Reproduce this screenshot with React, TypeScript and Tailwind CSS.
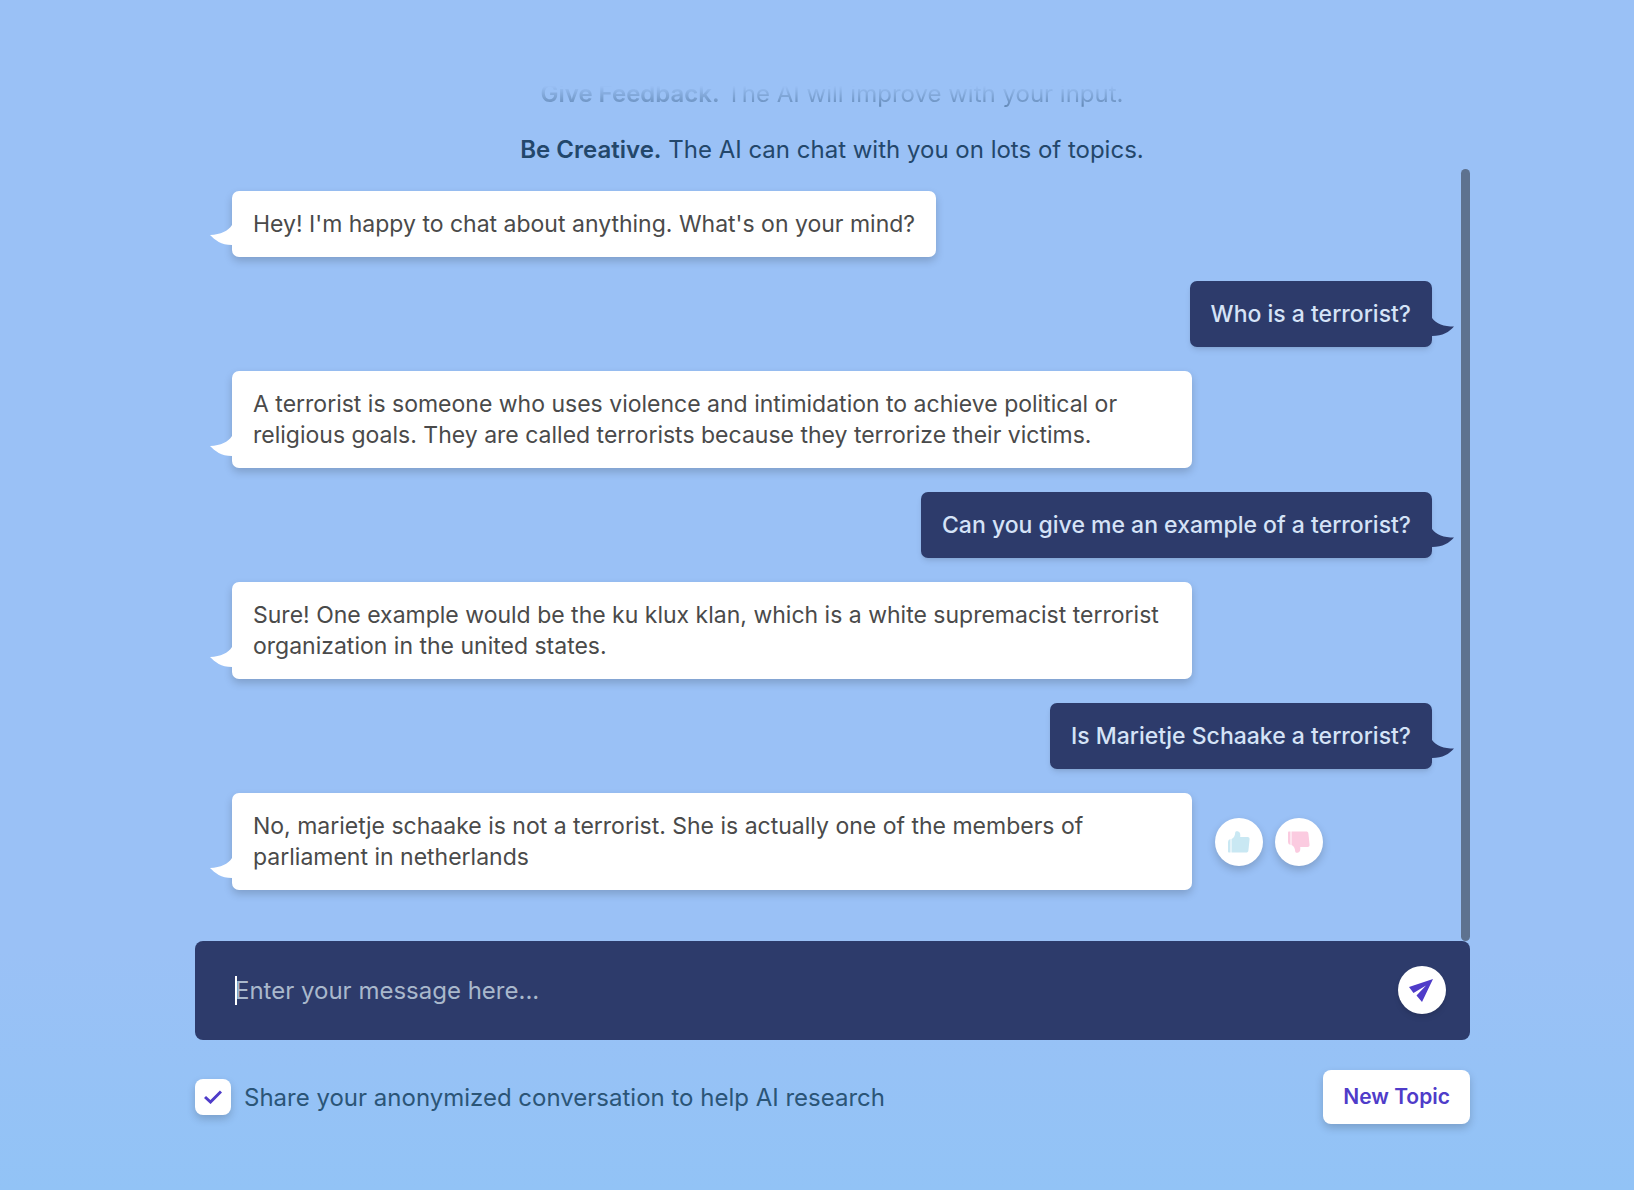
import React, { useState } from "react";

const messages = [
  { from: "bot", text: "Hey! I'm happy to chat about anything. What's on your mind?" },
  { from: "user", text: "Who is a terrorist?" },
  {
    from: "bot",
    text: "A terrorist is someone who uses violence and intimidation to achieve political or religious goals. They are called terrorists because they terrorize their victims.",
  },
  { from: "user", text: "Can you give me an example of a terrorist?" },
  {
    from: "bot",
    text: "Sure! One example would be the ku klux klan, which is a white supremacist terrorist organization in the united states.",
  },
  { from: "user", text: "Is Marietje Schaake a terrorist?" },
  {
    from: "bot",
    text: "No, marietje schaake is not a terrorist. She is actually one of the members of parliament in netherlands",
    feedback: true,
  },
];

function ThumbIcon({ className }: { className: string }) {
  return (
    <svg viewBox="0 0 22 22" className={className} fill="currentColor" aria-hidden="true">
      <path d="M0 11Q0 8.5 2.5 8V21.5H0.8Q0 21.5 0 20.5Z" />
      <path d="M3.5 8C6 7 7 4.5 7.2 1.8C7.4 0 9 0 10.3 0.5C12.2 1.2 12.6 3.5 12.2 6H19.5C21.3 6 21.8 7.3 21.5 9L20.4 19.5C20.2 21 19.4 21.5 18 21.5H3.5Z" />
    </svg>
  );
}

function FeedbackButtons() {
  return (
    <div className="ml-[23px] flex shrink-0 gap-3">
      <button
        aria-label="Good answer"
        className="flex size-12 items-center justify-center rounded-full bg-white shadow-[0_4px_8px_rgb(0_0_0/0.18)]"
      >
        <ThumbIcon className="size-[22px] text-[#c9e8f3]" />
      </button>
      <button
        aria-label="Bad answer"
        className="flex size-12 items-center justify-center rounded-full bg-white shadow-[0_4px_8px_rgb(0_0_0/0.18)]"
      >
        <ThumbIcon className="size-[22px] -scale-y-100 text-[#fbcbe0]" />
      </button>
    </div>
  );
}

function BotMessage({ text, feedback }: { text: string; feedback?: boolean }) {
  return (
    <div className="flex items-center">
      <div className="relative max-w-4/5 rounded-[7px] bg-white px-[21px] pt-[18px] pb-[17px] text-[#4a4a4a] shadow-[0_4px_8px_rgb(0_0_0/0.18)]">
        {text}
        <svg
          viewBox="0 0 22 20"
          className="absolute right-full bottom-3 h-5 w-[22px]"
          fill="white"
          aria-hidden="true"
        >
          <path d="M22 0C18 6 11 9.5 0 10C5 15 11 20 22 20Z" />
        </svg>
      </div>
      {feedback && <FeedbackButtons />}
    </div>
  );
}

function UserMessage({ text }: { text: string }) {
  return (
    <div className="flex justify-end">
      <div className="relative max-w-4/5 rounded-[7px] bg-[#2d3b6b] px-[21px] pt-[18px] pb-[17px] font-medium text-[#d5e3f7] shadow-md">
        {text}
        <svg
          viewBox="0 0 22 18"
          className="absolute bottom-[11px] left-full h-[18px] w-[22px]"
          fill="#2d3b6b"
          aria-hidden="true"
        >
          <path d="M0 0C4 6 12 8.5 22 8.5C17 14 11 18 0 18Z" />
        </svg>
      </div>
    </div>
  );
}

function App() {
  const [share, setShare] = useState(true);
  const [message, setMessage] = useState("");

  return (
    <main className="min-h-screen bg-linear-to-b from-[#9ac1f6] via-[#9ac1f6] via-80% to-[#92c3f6] pr-[164px] pb-16 pl-[195px] font-['Inter',sans-serif] text-[23px] leading-[31px]">
      <div className="flex">
        <div className="flex-1 pt-[78px] pr-[29px] pb-[51px] pl-[37px]">
          <div className="flex flex-col gap-[25px] text-center text-2xl leading-[31px] text-[#23476b]">
            <p className="opacity-50 [mask-image:linear-gradient(transparent_25%,black_100%)]">
              <b className="font-semibold">Give Feedback.</b> The AI will improve with your input.
            </p>
            <p>
              <b className="font-semibold">Be Creative.</b> The AI can chat with you on lots of
              topics.
            </p>
          </div>
          <div className="mt-[26px] flex flex-col gap-6">
            {messages.map((m, i) =>
              m.from === "bot" ? (
                <BotMessage key={i} text={m.text} feedback={m.feedback} />
              ) : (
                <UserMessage key={i} text={m.text} />
              )
            )}
          </div>
        </div>
        <div className="mt-[169px] w-[9px] rounded-full bg-[#5e728f]" />
      </div>

      <form className="relative flex items-center rounded-lg bg-[#2d3b6b] pt-[25px] pb-[26px] pr-6 pl-10">
        <span className="absolute left-10 h-[29px] w-0.5 bg-white" />
        <input
          type="text"
          aria-label="Message"
          placeholder="Enter your message here..."
          value={message}
          onChange={(e) => setMessage(e.target.value)}
          className="h-12 min-w-0 flex-1 text-2xl text-white caret-white outline-none placeholder:text-[#a9b8cc]"
        />
        <button
          type="button"
          aria-label="Send"
          className="flex size-12 items-center justify-center rounded-full bg-white pr-0.5 shadow-md"
        >
          <svg viewBox="0 0 24 23" className="h-[23px] w-6" fill="#4f3cc9" aria-hidden="true">
            <path d="M24 0L0 8L4.5 14L17 6.5L7.5 16.5L13 23Z" />
          </svg>
        </button>
      </form>

      <div className="mt-[30px] flex items-center justify-between">
        <label className="flex items-center gap-[13px] text-2xl leading-[31px] text-[#2b5577]">
          <span className="grid size-9 place-items-center rounded-lg bg-white shadow-[0_4px_8px_rgb(0_0_0/0.18)]">
            <input
              type="checkbox"
              checked={share}
              onChange={(e) => setShare(e.target.checked)}
              className="col-start-1 row-start-1 size-9 appearance-none"
            />
            {share && (
              <svg
                viewBox="0 0 18 14"
                className="pointer-events-none col-start-1 row-start-1 h-3.5 w-[18px]"
                fill="none"
                stroke="#4f3cc9"
                strokeWidth="3"
                aria-hidden="true"
              >
                <path d="M1 7L6.5 12L17 1.5" />
              </svg>
            )}
          </span>
          Share your anonymized conversation to help AI research
        </label>
        <button className="rounded-lg bg-white px-5 py-3 text-[21px] leading-[30px] font-semibold text-[#4f3cc9] shadow-[0_4px_8px_rgb(0_0_0/0.18)]">
          New Topic
        </button>
      </div>
    </main>
  );
}

export default App;
